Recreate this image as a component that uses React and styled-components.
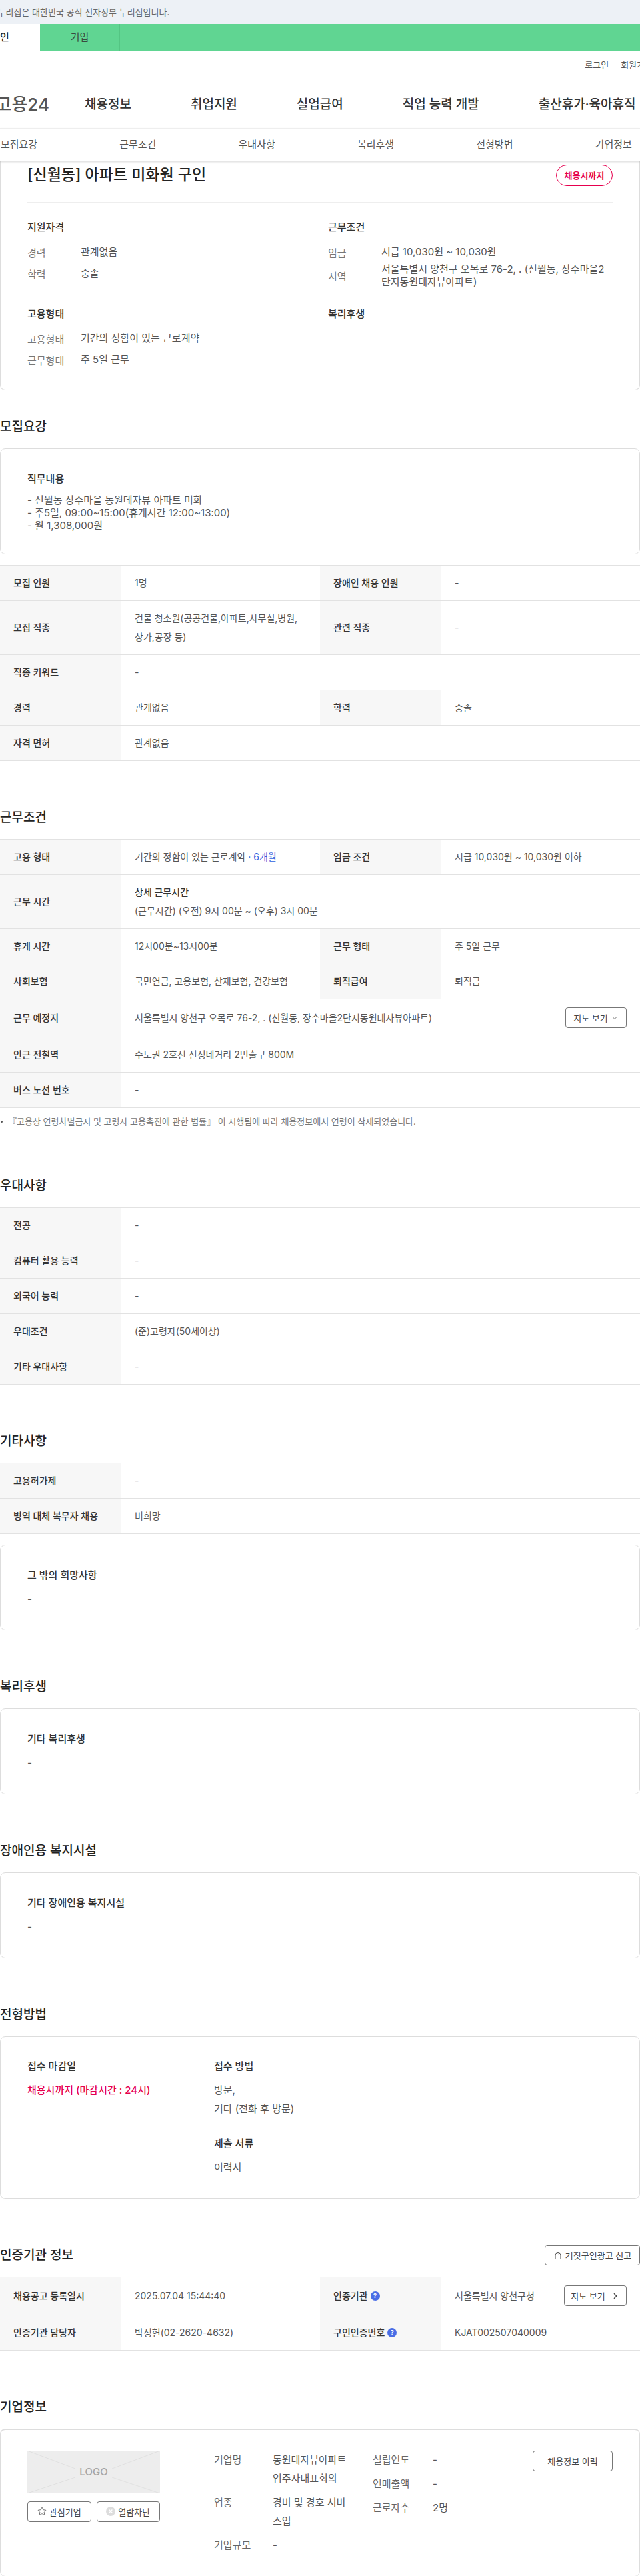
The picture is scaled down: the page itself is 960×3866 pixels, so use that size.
import React from "react";
import styled, { createGlobalStyle } from "styled-components";
import { ChevronDown, ChevronRight, Star } from "lucide-react";

const Global = createGlobalStyle`
  html, body { margin: 0; padding: 0; background: #fff; }
  body { font-family: Inter, "Noto Sans CJK KR", sans-serif; color: #444; overflow-x: hidden; }
  * { box-sizing: border-box; }
  h1, h2, h3, p, dl, dd, dt, ul { margin: 0; padding: 0; }
  ul { list-style: none; }
`;

const Page = styled.div`
  width: 960px;
  overflow: hidden;
`;
const GovBar = styled.div`
  height: 36px;
  background: #edf1f6;
  margin-left: -19px;
  padding-left: 0;
  font-size: 13px;
  line-height: 36px;
  color: #666;
  white-space: nowrap;
  box-shadow: 19px 0 0 #edf1f6;
  width: 1000px;
`;
const SiteTabs = styled.div`
  display: flex;
  height: 40px;
  width: 1080px;
  margin-left: -60px;
  background: #60d592;
`;
const SiteTab = styled.div`
  width: 120px;
  height: 40px;
  line-height: 40px;
  text-align: center;
  font-size: 15px;
  color: ${(p) => (p.$active ? "#222" : "#3a4a40")};
  font-weight: ${(p) => (p.$active ? 500 : 400)};
  background: ${(p) => (p.$active ? "#fff" : "transparent")};
  border-right: ${(p) => (p.$active ? "0" : "1px solid #54c583")};
`;
const Masthead = styled.header`
  width: 1080px;
  margin-left: -60px;
`;
const Utility = styled.div`
  display: flex;
  justify-content: flex-end;
  gap: 18px;
  height: 40px;
  padding-right: 41px;
  align-items: center;
  font-size: 13px;
  color: #555;
`;
const MainNav = styled.nav`
  display: flex;
  align-items: center;
  height: 76px;
`;
const Logo = styled.div`
  width: 134px;
  text-align: right;
  font-size: 26px;
  font-weight: 500;
  color: #555;
  white-space: nowrap;
`;
const NavList = styled.ul`
  display: flex;
  gap: 89px;
  margin-left: 53px;
`;
const NavItem = styled.li`
  font-size: 19px;
  font-weight: 500;
  color: #333;
  white-space: nowrap;
`;
const AnchorBar = styled.div`
  height: 49px;
  border-top: 1px solid #eee;
  box-shadow: 0 2px 3px rgba(0, 0, 0, 0.16);
  position: relative;
  z-index: 2;
  background: #fff;
`;
const AnchorList = styled.ul`
  display: flex;
  margin-left: -60.7px;
  width: 1080px;
`;
const AnchorItem = styled.li`
  width: 178.35px;
  text-align: center;
  font-size: 15px;
  line-height: 48px;
  color: #555;
`;
const Hero = styled.section`
  border: 1px solid #ddd;
  border-top: 0;
  border-radius: 0 0 8px 8px;
  padding: 6px 40px 33px;
`;
const HeroHead = styled.div`
  display: flex;
  justify-content: space-between;
  align-items: flex-start;
  height: 57px;
  border-bottom: 1px solid #eee;
`;
const Title = styled.h1`
  font-size: 23px;
  line-height: 30px;
  font-weight: 500;
  color: #222;
`;
const DeadlineBadge = styled.span`
  width: 85px;
  height: 32px;
  border: 1px solid #e6004e;
  border-radius: 16px;
  color: #e6004e;
  font-size: 13px;
  font-weight: 700;
  line-height: 30px;
  text-align: center;
`;
const HeroGrid = styled.div`
  display: grid;
  grid-template-columns: 451px 427px;
  row-gap: 28px;
  padding-top: 26px;
`;
const GroupTitle = styled.h3`
  font-size: 15px;
  line-height: 22px;
  font-weight: 500;
  color: #333;
`;
const InfoRow = styled.div`
  display: flex;
  align-items: center;
  margin-top: ${(p) => (p.$tight ? "4px" : "8px")};
  min-height: 24px;
  font-size: 15px;
  &:nth-child(2) { margin-top: 14px; }
`;
const InfoLabel = styled.div`
  width: 80px;
  flex: none;
  color: #777;
`;
const InfoValue = styled.div`
  color: #555;
  line-height: ${(p) => (p.$tight ? "19px" : "24px")};
  word-break: break-all;
`;
const Section = styled.section`
  padding-top: ${(p) => (p.$first ? "41px" : "71px")};
`;
const SectionHead = styled.div`
  display: flex;
  justify-content: space-between;
  align-items: center;
  height: 28px;
  margin-bottom: 18px;
`;
const Heading = styled.h2`
  font-size: 19px;
  line-height: 28px;
  font-weight: 500;
  color: #222;
`;
const Card = styled.div`
  border: 1px solid #ddd;
  border-radius: 8px;
  padding: 34px 40px 32px;
  min-height: 129px;
  margin-bottom: ${(p) => (p.$spaced ? "16px" : "0")};
  margin-top: ${(p) => (p.$afterTable ? "16px" : "0")};
`;
const CardTitle = styled.h3`
  font-size: 15px;
  line-height: 22px;
  font-weight: 500;
  color: #333;
`;
const CardText = styled.p`
  margin-top: ${(p) => (p.$short ? "15px" : "11px")};
  font-size: 15px;
  line-height: 19.2px;
  color: #555;
`;
const Table = styled.div`
  border-top: 1px solid #e2e2e2;
`;
const Row = styled.div`
  display: grid;
  grid-template-columns: 182px 298px 182px 298px;
  border-bottom: 1px solid #e2e2e2;
  min-height: ${(p) => (p.$tall ? "57px" : "53px")};
`;
const Th = styled.div`
  display: flex;
  align-items: center;
  gap: 4px;
  background: #f7f7f7;
  padding: 12px 20px;
  font-size: 14px;
  font-weight: 500;
  color: #333;
  line-height: 28px;
`;
const Td = styled.div`
  display: flex;
  flex-direction: column;
  justify-content: center;
  padding: 12px 20px;
  font-size: 14px;
  line-height: 28px;
  color: #555;
  word-break: keep-all;
  grid-column: ${(p) => (p.$wide ? "span 3" : "auto")};
`;
const TdSplit = styled.div`
  display: flex;
  align-items: center;
  justify-content: space-between;
  padding: 12px 20px;
  font-size: 14px;
  line-height: 28px;
  color: #555;
  grid-column: ${(p) => (p.$wide ? "span 3" : "auto")};
`;
const SubHead = styled.strong`
  font-weight: 500;
  color: #333;
`;
const Months = styled.span`
  color: #2d5fe0;
`;
const OutlineButton = styled.button`
  display: inline-flex;
  align-items: center;
  justify-content: center;
  gap: ${(p) => p.$gap || "4px"};
  flex: ${(p) => (p.$grow ? "1" : "none")};
  width: ${(p) => p.$w || "auto"};
  height: 31px;
  padding: 0;
  background: #fff;
  border: 1px solid #777;
  border-radius: 4px;
  font-family: inherit;
  font-size: 13px;
  color: #444;
  white-space: nowrap;
`;
const Note = styled.p`
  position: relative;
  margin: 11px 0 2px;
  padding-left: 12px;
  font-size: 13px;
  line-height: 19px;
  color: #777;
  white-space: nowrap;
  &::before {
    content: "";
    position: absolute;
    left: 1px;
    top: 8px;
    width: 3px;
    height: 3px;
    border-radius: 50%;
    background: #555;
  }
`;
const MethodCard = styled.div`
  display: flex;
  border: 1px solid #ddd;
  border-radius: 8px;
  padding: 32px 0;
`;
const MethodLeft = styled.div`
  width: 280px;
  flex: none;
  padding: 1px 40px 0;
  border-right: 1px solid #e8e8e8;
`;
const MethodRight = styled.div`
  padding: 1px 0 0 40px;
`;
const MethodValue = styled.p`
  margin: 11px 0 27px;
  font-size: 15px;
  line-height: 28px;
  color: ${(p) => (p.$alert ? "#e6004e" : "#555")};
  font-weight: ${(p) => (p.$alert ? 500 : 400)};
  white-space: pre-line;
  &:last-child { margin-bottom: 0; }
`;
const HelpDot = styled.span`
  width: 14px;
  height: 14px;
  border-radius: 50%;
  background: #4a6de5;
  color: #fff;
  font-size: 9px;
  line-height: 14px;
  text-align: center;
  font-weight: 700;
`;
const CompanyCard = styled.div`
  display: flex;
  border: 1px solid #ddd;
  border-top-width: 2px;
  border-radius: 8px;
  padding: 31px 40px 32px 0;
`;
const CompanyLeft = styled.div`
  width: 280px;
  flex: none;
  padding: 0 40px;
  border-right: 1px solid #e8e8e8;
`;
const LogoBox = styled.div`
  position: relative;
  display: flex;
  align-items: center;
  justify-content: center;
  height: 64px;
  background: #ededed;
  font-size: 15px;
  font-weight: 500;
  color: #a5a5a5;
`;
const LogoLines = styled.svg`
  position: absolute;
  inset: 0;
  width: 100%;
  height: 100%;
`;
const LogoWord = styled.span`
  position: relative;
`;
const CompanyButtons = styled.div`
  display: flex;
  gap: 8px;
  margin-top: 12px;
`;
const CompanyInfo = styled.div`
  flex: 1;
  display: flex;
  padding-left: 40px;
`;
const InfoColumn = styled.dl`
  display: grid;
  grid-template-columns: ${(p) => (p.$wide ? "88px 120px" : "90px 60px")};
  width: ${(p) => (p.$wide ? "238px" : "auto")};
  row-gap: 8px;
  align-content: start;
  font-size: 15px;
  line-height: 28px;
`;
const Dt = styled.dt`
  color: #666;
  white-space: nowrap;
`;
const Dd = styled.dd`
  color: #555;
  word-break: break-all;
`;
const HistoryWrap = styled.div`
  margin-left: auto;
`;

const Rows = ({ rows }) => (
  <Table>
    {rows.map((r, i) => (
      <Row key={i}>
        <Th>{r[0]}</Th>
        <Td $wide>{r[1]}</Td>
      </Row>
    ))}
  </Table>
);

const BlockIcon = () => (
  <svg width="14" height="14" viewBox="0 0 14 14">
    <circle cx="7" cy="7" r="7" fill="#dcdcdc" />
    <path d="M4.6 4.6l4.8 4.8M9.4 4.6l-4.8 4.8" stroke="#fff" strokeWidth="1.4" />
  </svg>
);
const SirenIcon = () => (
  <svg width="14" height="14" viewBox="0 0 14 14" fill="none" stroke="#444" strokeWidth="1">
    <path d="M3 12V6.5a4 4 0 0 1 8 0V12" />
    <path d="M1 12.5h12" />
    <path d="M7.5 4.8a2 2 0 0 1 1.4 1.7" />
  </svg>
);

export default function App() {
  return (
    <Page>
      <Global />
      <GovBar>이 누리집은 대한민국 공식 전자정부 누리집입니다.</GovBar>
      <SiteTabs>
        <SiteTab $active>개인</SiteTab>
        <SiteTab>기업</SiteTab>
      </SiteTabs>
      <Masthead>
        <Utility>
          <span>로그인</span>
          <span>회원가입</span>
        </Utility>
        <MainNav>
          <Logo>고용24</Logo>
          <NavList>
            <NavItem>채용정보</NavItem>
            <NavItem>취업지원</NavItem>
            <NavItem>실업급여</NavItem>
            <NavItem>직업 능력 개발</NavItem>
            <NavItem>출산휴가·육아휴직</NavItem>
          </NavList>
        </MainNav>
      </Masthead>
      <AnchorBar>
        <AnchorList>
          {["모집요강", "근무조건", "우대사항", "복리후생", "전형방법", "기업정보"].map((t) => (
            <AnchorItem key={t}>{t}</AnchorItem>
          ))}
        </AnchorList>
      </AnchorBar>

      <Hero>
        <HeroHead>
          <Title>[신월동] 아파트 미화원 구인</Title>
          <DeadlineBadge>채용시까지</DeadlineBadge>
        </HeroHead>
        <HeroGrid>
          <div>
            <GroupTitle>지원자격</GroupTitle>
            <InfoRow><InfoLabel>경력</InfoLabel><InfoValue>관계없음</InfoValue></InfoRow>
            <InfoRow><InfoLabel>학력</InfoLabel><InfoValue>중졸</InfoValue></InfoRow>
          </div>
          <div>
            <GroupTitle>근무조건</GroupTitle>
            <InfoRow><InfoLabel>임금</InfoLabel><InfoValue>시급 10,030원 ~ 10,030원</InfoValue></InfoRow>
            <InfoRow $tight>
              <InfoLabel>지역</InfoLabel>
              <InfoValue $tight>서울특별시 양천구 오목로 76-2, . (신월동, 장수마을2단지동원데자뷰아파트)</InfoValue>
            </InfoRow>
          </div>
          <div>
            <GroupTitle>고용형태</GroupTitle>
            <InfoRow><InfoLabel>고용형태</InfoLabel><InfoValue>기간의 정함이 있는 근로계약</InfoValue></InfoRow>
            <InfoRow><InfoLabel>근무형태</InfoLabel><InfoValue>주 5일 근무</InfoValue></InfoRow>
          </div>
          <div>
            <GroupTitle>복리후생</GroupTitle>
          </div>
        </HeroGrid>
      </Hero>

      <Section $first>
        <SectionHead><Heading>모집요강</Heading></SectionHead>
        <Card $spaced>
          <CardTitle>직무내용</CardTitle>
          <CardText>
            - 신월동 장수마을 동원데자뷰 아파트 미화<br />
            - 주5일, 09:00~15:00(휴게시간 12:00~13:00)<br />
            - 월 1,308,000원
          </CardText>
        </Card>
        <Table>
          <Row><Th>모집 인원</Th><Td>1명</Td><Th>장애인 채용 인원</Th><Td>-</Td></Row>
          <Row><Th>모집 직종</Th><Td>건물 청소원(공공건물,아파트,사무실,병원, 상가,공장 등)</Td><Th>관련 직종</Th><Td>-</Td></Row>
          <Row><Th>직종 키워드</Th><Td $wide>-</Td></Row>
          <Row><Th>경력</Th><Td>관계없음</Td><Th>학력</Th><Td>중졸</Td></Row>
          <Row><Th>자격 면허</Th><Td $wide>관계없음</Td></Row>
        </Table>
      </Section>

      <Section>
        <SectionHead><Heading>근무조건</Heading></SectionHead>
        <Table>
          <Row><Th>고용 형태</Th><Td>
            <span>기간의 정함이 있는 근로계약 <Months>· 6개월</Months></span>
          </Td><Th>임금 조건</Th><Td>시급 10,030원 ~ 10,030원 이하</Td></Row>
          <Row><Th>근무 시간</Th><Td $wide><SubHead>상세 근무시간</SubHead><span>(근무시간) (오전) 9시 00분 ~ (오후) 3시 00분</span></Td></Row>
          <Row><Th>휴게 시간</Th><Td>12시00분~13시00분</Td><Th>근무 형태</Th><Td>주 5일 근무</Td></Row>
          <Row><Th>사회보험</Th><Td>국민연금, 고용보험, 산재보험, 건강보험</Td><Th>퇴직급여</Th><Td>퇴직금</Td></Row>
          <Row $tall>
            <Th>근무 예정지</Th>
            <TdSplit $wide>
              <span>서울특별시 양천구 오목로 76-2, . (신월동, 장수마을2단지동원데자뷰아파트)</span>
              <OutlineButton $w="92px">지도 보기 <ChevronDown size={12} strokeWidth={1.5} /></OutlineButton>
            </TdSplit>
          </Row>
          <Row><Th>인근 전철역</Th><Td $wide>수도권 2호선 신정네거리 2번출구 800M</Td></Row>
          <Row><Th>버스 노선 번호</Th><Td $wide>-</Td></Row>
        </Table>
        <Note>『고용상 연령차별금지 및 고령자 고용촉진에 관한 법률』 이 시행됨에 따라 채용정보에서 연령이 삭제되었습니다.</Note>
      </Section>

      <Section>
        <SectionHead><Heading>우대사항</Heading></SectionHead>
        <Rows rows={[["전공", "-"], ["컴퓨터 활용 능력", "-"], ["외국어 능력", "-"], ["우대조건", "(준)고령자(50세이상)"], ["기타 우대사항", "-"]]} />
      </Section>

      <Section>
        <SectionHead><Heading>기타사항</Heading></SectionHead>
        <Rows rows={[["고용허가제", "-"], ["병역 대체 복무자 채용", "비희망"]]} />
        <Card $afterTable>
          <CardTitle>그 밖의 희망사항</CardTitle>
          <CardText $short>-</CardText>
        </Card>
      </Section>

      <Section>
        <SectionHead><Heading>복리후생</Heading></SectionHead>
        <Card>
          <CardTitle>기타 복리후생</CardTitle>
          <CardText $short>-</CardText>
        </Card>
      </Section>

      <Section>
        <SectionHead><Heading>장애인용 복지시설</Heading></SectionHead>
        <Card>
          <CardTitle>기타 장애인용 복지시설</CardTitle>
          <CardText $short>-</CardText>
        </Card>
      </Section>

      <Section>
        <SectionHead><Heading>전형방법</Heading></SectionHead>
        <MethodCard>
          <MethodLeft>
            <CardTitle>접수 마감일</CardTitle>
            <MethodValue $alert>채용시까지 (마감시간 : 24시)</MethodValue>
          </MethodLeft>
          <MethodRight>
            <CardTitle>접수 방법</CardTitle>
            <MethodValue>{"방문,\n기타 (전화 후 방문)"}</MethodValue>
            <CardTitle>제출 서류</CardTitle>
            <MethodValue>이력서</MethodValue>
          </MethodRight>
        </MethodCard>
      </Section>

      <Section>
        <SectionHead>
          <Heading>인증기관 정보</Heading>
          <OutlineButton $w="143px"><SirenIcon />거짓구인광고 신고</OutlineButton>
        </SectionHead>
        <Table>
          <Row $tall>
            <Th>채용공고 등록일시</Th>
            <Td>2025.07.04 15:44:40</Td>
            <Th>인증기관 <HelpDot>?</HelpDot></Th>
            <TdSplit>
              <span>서울특별시 양천구청</span>
              <OutlineButton $w="94px" $gap="8px">지도 보기 <ChevronRight size={14} strokeWidth={2} /></OutlineButton>
            </TdSplit>
          </Row>
          <Row>
            <Th>인증기관 담당자</Th>
            <Td>박정현(02-2620-4632)</Td>
            <Th>구인인증번호 <HelpDot>?</HelpDot></Th>
            <Td>KJAT002507040009</Td>
          </Row>
        </Table>
      </Section>

      <Section>
        <SectionHead><Heading>기업정보</Heading></SectionHead>
        <CompanyCard>
          <CompanyLeft>
            <LogoBox>
              <LogoLines viewBox="0 0 199 64" preserveAspectRatio="none">
                <path d="M0 0L72 27M199 0L127 27M0 64L72 40M199 64L127 40" stroke="#e0e0e0" strokeWidth="1" fill="none" />
              </LogoLines>
              <LogoWord>LOGO</LogoWord>
            </LogoBox>
            <CompanyButtons>
              <OutlineButton $grow><Star size={14} strokeWidth={1.3} />관심기업</OutlineButton>
              <OutlineButton $grow><BlockIcon />열람차단</OutlineButton>
            </CompanyButtons>
          </CompanyLeft>
          <CompanyInfo>
            <InfoColumn $wide>
              <Dt>기업명</Dt><Dd>동원데자뷰아파트입주자대표회의</Dd>
              <Dt>업종</Dt><Dd>경비 및 경호 서비스업</Dd>
              <Dt>기업규모</Dt><Dd>-</Dd>
            </InfoColumn>
            <InfoColumn>
              <Dt>설립연도</Dt><Dd>-</Dd>
              <Dt>연매출액</Dt><Dd>-</Dd>
              <Dt>근로자수</Dt><Dd>2명</Dd>
            </InfoColumn>
            <HistoryWrap>
              <OutlineButton $w="120px">채용정보 이력</OutlineButton>
            </HistoryWrap>
          </CompanyInfo>
        </CompanyCard>
      </Section>
    </Page>
  );
}
